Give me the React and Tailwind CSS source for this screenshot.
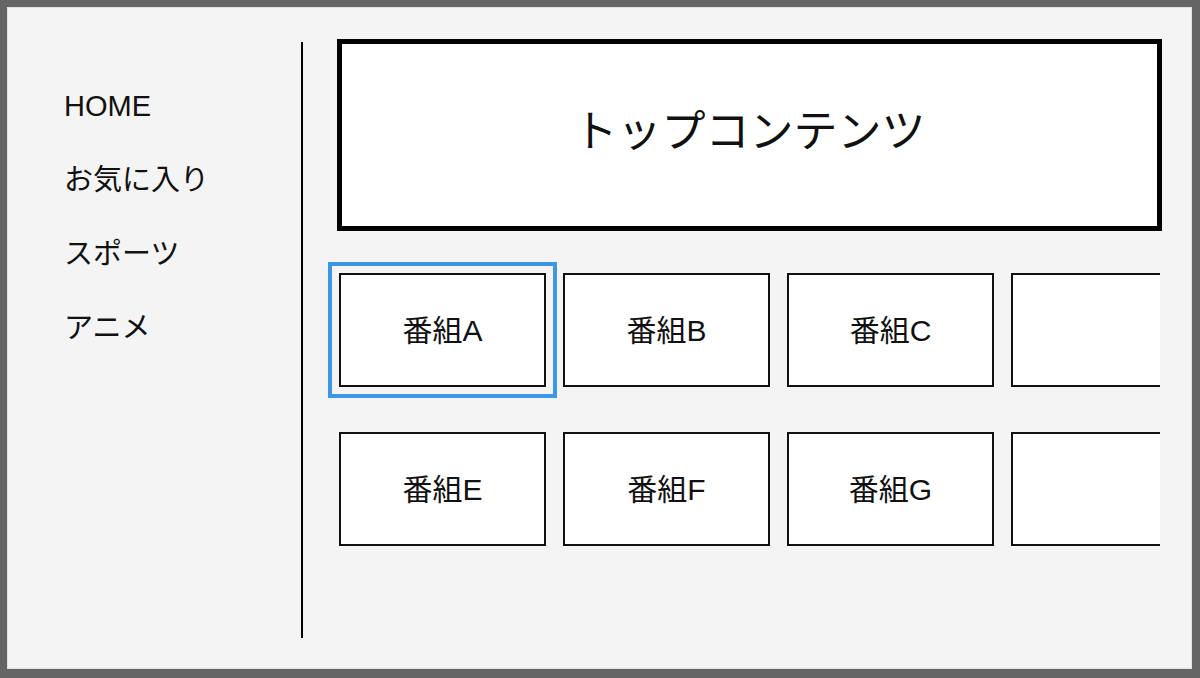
const menu = ["HOME", "お気に入り", "スポーツ", "アニメ"];

const rows = [
  ["番組A", "番組B", "番組C", ""],
  ["番組E", "番組F", "番組G", ""],
];

const ProgramCard = ({ label, active }) => (
  <div
    className={`w-[207px] h-[114px] shrink-0 bg-white border-2 border-[#111] flex items-center justify-center text-[30px] text-[#111] ${
      active ? "outline-4 outline-[#3d97e8] outline-offset-[7px]" : ""
    }`}
  >
    {label}
  </div>
);

export default function App() {
  return (
    <div
      className="w-[1200px] h-[678px] bg-[#656565] pt-[7px] pl-[7px] pr-[8px] pb-[9px]"
      style={{ fontFamily: '"Liberation Sans", "Noto Sans CJK JP", sans-serif' }}
    >
      <div className="w-full h-full bg-[#f4f4f4] shadow-[inset_0_0_0_1px_#e2e2e2] flex overflow-hidden">
        {/* Sidebar */}
        <div className="w-[296px] shrink-0 mt-[35px] mb-[31px] border-r-2 border-black pl-[57px] pt-[44px] flex flex-col gap-[34px]">
          {menu.map((item) => (
            <div key={item} className="text-[29px] leading-[40px] text-[#111]">
              {item}
            </div>
          ))}
        </div>

        {/* Main */}
        <div className="flex-1 pl-[25px] pt-[32px]">
          <div className="ml-[9px] w-[825px] h-[192px] bg-white border-[5px] border-black flex items-center justify-center pb-[6px]">
            <span className="text-[44px] text-[#111]">トップコンテンツ</span>
          </div>

          <div className="mt-[30px] w-[832px] overflow-hidden pl-[11px] pt-[12px] pb-[12px] flex flex-col gap-[45px]">
            {rows.map((row, i) => (
              <div key={i} className="flex gap-[17px]">
                {row.map((label, j) => (
                  <ProgramCard key={j} label={label} active={i === 0 && j === 0} />
                ))}
              </div>
            ))}
          </div>
        </div>
      </div>
    </div>
  );
}
